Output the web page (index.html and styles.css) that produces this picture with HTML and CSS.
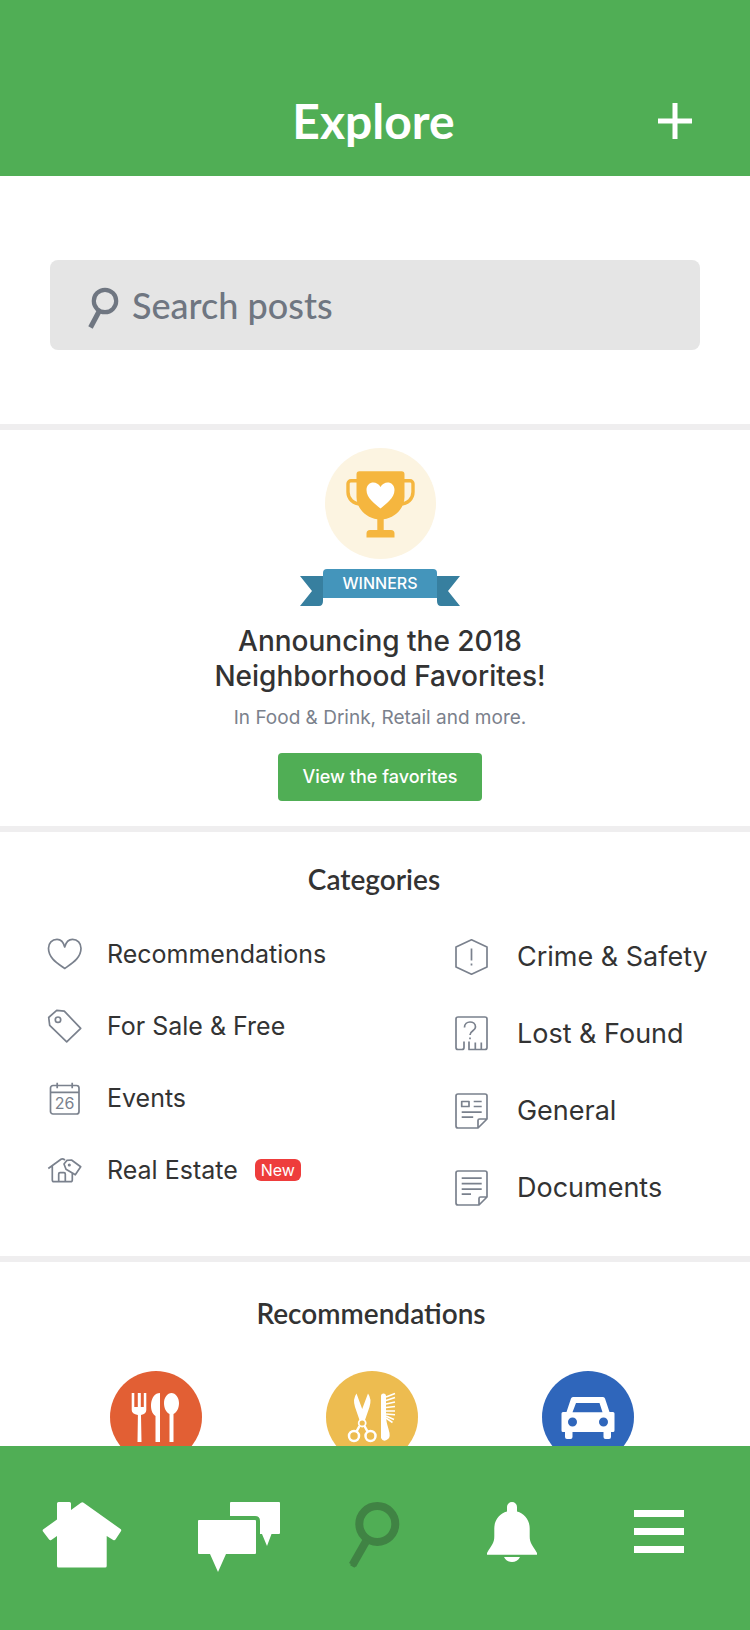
FILE: index.html
```html
<!DOCTYPE html>
<html lang="en">
<head>
<meta charset="utf-8">
<meta name="viewport" content="width=device-width, initial-scale=1">
<title>Explore</title>
<link rel="stylesheet" href="styles.css">
</head>
<body>
<div class="app">
  <header class="topbar">
    <h1 class="topbar-title">Explore</h1>
    <button class="add" type="button" aria-label="Add">
      <svg width="34" height="36" viewBox="0 0 34 36"><path d="M14.500 0h5v15.500H34v5H19.500V36h-5V20.500H0v-5h14.500z" fill="#fff"/></svg>
    </button>
  </header>

  <main class="content">
    <form class="search">
      <label class="search-box">
        <svg width="32" height="42" viewBox="0 0 32 42" fill="none" stroke="#6f7681" aria-hidden="true"><circle cx="17" cy="14" r="11.200" stroke-width="4.200"/><path d="M11 24.500 2.500 40.500" stroke-width="5"/></svg>
        <input class="search-input" type="search" placeholder="Search posts" aria-label="Search posts">
      </label>
    </form>

    <section class="promo">
      <svg width="111" height="111" viewBox="0 0 111 111" aria-hidden="true">
        <circle cx="55.500" cy="55.500" r="55.500" fill="#fcf4e1"/>
        <g fill="none" stroke="#f5b63f" stroke-width="3.400"><path d="M33 32.800h-7a3 3 0 0 0-3 3V44c0 6.500 5 12 13 12"/><path d="M78 32.800h7a3 3 0 0 1 3 3V44c0 6.500-5 12-13 12"/></g>
        <path d="M34.500 23.300h42a3 3 0 0 1 3 3V49c0 10-8 20.500-20.800 22.300V82h7.300a3.500 3.500 0 0 1 3.500 3.500v4h-28v-4A3.500 3.500 0 0 1 45 82h7.300V71.300C39.500 69.500 31.500 59 31.500 49V26.300a3 3 0 0 1 3-3z" fill="#f5b63f"/>
        <path d="M55.500 60.500C50 56 41.500 50 41.500 42c0-9 10.500-10 14-3 3.500-7 14-6 14 3 0 8-8.500 14-14 18.500z" fill="#fff"/>
      </svg>
      <div class="ribbon">
        <svg width="23" height="30" viewBox="0 0 23 30" aria-hidden="true"><path d="M0 0h23v25q0 5-4 5H0l12-15z" fill="#377f9f"/></svg>
        <span class="ribbon-label">WINNERS</span>
        <svg width="23" height="30" viewBox="0 0 23 30" aria-hidden="true"><path d="M23 0H0v25q0 5 4 5h19L11 15z" fill="#377f9f"/></svg>
      </div>
      <h2 class="promo-title">Announcing the 2018<br>Neighborhood Favorites!</h2>
      <p class="promo-text">In Food &amp; Drink, Retail and more.</p>
      <button class="promo-button" type="button">View the favorites</button>
    </section>

    <section class="categories">
      <h2 class="heading">Categories</h2>
      <div class="columns">
        <ul class="list">
          <li><a class="item" href="#recommendations">
            <svg class="icon" viewBox="0 0 36 36"><path d="M18.700 11C17.500 6 14.500 3.300 11 3.300c-5 0-8.500 4-8.500 9C2.500 22 11 27 18.700 32.500 26.500 27 35 22 35 12.300c0-5-3.500-9-8.500-9-3.500 0-6.500 2.700-7.800 7.700z"/></svg>
            <span>Recommendations</span></a></li>
          <li><a class="item" href="#sale">
            <svg class="icon" viewBox="0 0 36 36"><path d="M10.700 2.300 18.300 3.200 34.700 20.300 20.700 33.800 3.700 17.300 2.700 9.500z"/><circle cx="12" cy="11.700" r="2.700"/></svg>
            <span>For Sale &amp; Free</span></a></li>
          <li><a class="item" href="#events">
            <svg class="icon" viewBox="0 0 36 36"><rect x="4.500" y="5.500" width="28.500" height="28.500" rx="2.500"/><path d="M4.500 12.300H33M11.200 2.700v5.600M26.200 2.700v5.600"/><text class="icon-date" x="18.700" y="29.300" text-anchor="middle">26</text></svg>
            <span>Events</span></a></li>
          <li><a class="item" href="#real-estate">
            <svg class="icon" viewBox="0 0 36 36"><path d="M2.300 16.500 15 7.200q1.500-1 4 .8M6.300 14v14q0 1.700 1.700 1.700h16.500q1.800 0 1.800-1.700v-6.500M12.700 29.500V22q0-1.300 1.300-1.300h4q1.300 0 1.300 1.300v7.500M18 12l3-3.700 4.500-.3 9.200 6.800-5.400 8-9.300-5.600z"/><circle cx="23.300" cy="13" r=".7"/></svg>
            <span>Real Estate</span><span class="badge">New</span></a></li>
        </ul>
        <ul class="list list-large">
          <li><a class="item" href="#crime">
            <svg class="icon" viewBox="0 0 36 36"><path d="M17.500.8 33 8v20l-15.500 7.200L2 28V8zM17.500 9.500v12M17.500 24.500v2"/></svg>
            <span>Crime &amp; Safety</span></a></li>
          <li><a class="item" href="#lost">
            <svg class="icon" viewBox="0 0 36 36"><path d="M10 25.500v6q0 2-2 2H4q-2 0-2-2v-28.500q0-2 2-2h27q2 0 2 2v28.500q0 2-2 2H15v-8M21.300 26.500v7M27.300 26.500v7M10.500 11.500c0-7.500 11-7 11-.5 0 4-5.500 3.500-5.500 8M16 21.500v1.700"/></svg>
            <span>Lost &amp; Found</span></a></li>
          <li><a class="item" href="#general">
            <svg class="icon" viewBox="0 0 36 36"><path d="M33 26v-23q0-2-2-2H4q-2 0-2 2v30q0 2 2 2h20zM24 35v-7.500q0-1.500 1.500-1.500H33M7.700 8.500H15v5H7.700zM19.700 8.500h8M19.700 13.500h8M7.700 19.200h20M7.700 24.200h11.500"/></svg>
            <span>General</span></a></li>
          <li><a class="item" href="#documents">
            <svg class="icon" viewBox="0 0 36 36"><path d="M33 27v-24q0-2-2-2H4q-2 0-2 2v30q0 2 2 2h21zM25 35v-6.500q0-1.500 1.500-1.500H33M7.700 8.200h20M7.700 13.700h20M7.700 19.200h20M7.700 24.200h9.300"/></svg>
            <span>Documents</span></a></li>
        </ul>
      </div>
    </section>

    <section class="recommendations" id="recommendations">
      <h2 class="heading">Recommendations</h2>
      <div class="circles">
        <a class="circle circle-food" href="#food" aria-label="Food and drink">
          <svg viewBox="0 0 92 92" fill="#fff"><path d="M21.700 22h2.600v14h3.500V22h3v14h3V22h2.500v17q0 4-5.300 5l.5 27h-4l.4-27q-6.200-1-6.200-5z"/><path d="M50 22v49h-4.500V45c-7-4-6-23 4.500-23z"/><path d="M61.500 22c4 0 7.500 4.500 7.500 10 0 5-2 9-5.500 11v28h-4V43C56 41 54 37 54 32c0-5.500 3.500-10 7.500-10z"/></svg>
        </a>
        <a class="circle circle-beauty" href="#beauty" aria-label="Beauty">
          <svg viewBox="0 0 92 92" fill="none" stroke="#fff"><path d="M30.500 22.500 36.200 38 42 22.500Q46 28 43.500 36L39 49h-5.500L29 36Q26.500 28 30.500 22.500z" fill="#fff" stroke="none"/><circle cx="36.200" cy="52" r="3.500" stroke-width="1.800"/><circle cx="28" cy="65" r="5" stroke-width="2.500"/><circle cx="44.500" cy="65" r="5" stroke-width="2.500"/><path d="m33.500 55-3 5.500M38.500 55l3 5.500" stroke-width="2.500"/><path d="M55 25q0-2.500 2.500-2.500T60 25v20q0 5 2.500 13t-.5 10q-4.500 4-7-1z" fill="#fff" stroke="none"/><path d="m60 26 9-3.500M60 29.500l9-3M60 33l9-2M60 36.500l9-1M60 40h9M60 43l9 .7M60 45l8 3.500M60 47l6.500 4.500" stroke-width="1.600"/></svg>
        </a>
        <a class="circle circle-auto" href="#auto" aria-label="Automotive">
          <svg viewBox="0 0 92 92" fill="#fff"><path fill-rule="evenodd" d="M31 26h30q1.500 0 2 1.500L67.500 41H71q1.500 0 1.500 1.500v17q0 1.500-1.500 1.500h-2v5q0 2-2 2h-3.500q-2 0-2-2v-5h-31v5q0 2-2 2H25q-2 0-2-2v-5h-2q-1.500 0-1.500-1.500v-17q0-1.500 1.500-1.500h3.500L29 27.500q.5-1.500 2-1.500zm3 6-3.500 9.200h30L57.500 32zm-3.500 14.500a4.500 4.500 0 1 0 0 9 4.500 4.500 0 0 0 0-9zm31 0a4.500 4.500 0 1 0 0 9 4.500 4.500 0 0 0 0-9z"/></svg>
        </a>
      </div>
    </section>
  </main>

  <nav class="tabs" aria-label="Main">
    <button class="tab" type="button" aria-label="Home"><svg width="80" height="72" viewBox="0 0 80 72" fill="#fff"><path d="M16.500 0h11q1.500 0 1.500 1.500V8L39 .8q1.300-.9 2.600 0L78.500 27q1.300 1 .4 2.300L73.500 37.500q-.9 1.300-2.300.4L64.700 34v30q0 1.500-1.500 1.500H16.500Q15 65.500 15 64V34l-5.700 4q-1.300.9-2.200-.4L1 29.500q-.9-1.300.4-2.200L15 17.500v-16Q15 0 16.500 0z"/></svg></button>
    <button class="tab" type="button" aria-label="Messages"><svg width="84" height="72" viewBox="0 0 84 72" fill="#fff"><path d="M2 18h56q1 0 1 1v32q0 1-1 1H29l-8 18-8-18H2q-1 0-1-1V19q0-1 1-1z"/><path d="M34 0h48q1 0 1 1v30q0 1-1 1h-7.500L70 44l-5-12h-2V19q0-5-5-5H33V1q0-1 1-1z"/></svg></button>
    <button class="tab" type="button" aria-label="Explore" aria-current="page"><svg width="52" height="72" viewBox="0 0 52 72" fill="none" stroke="#408344" stroke-width="8"><circle cx="29.300" cy="22" r="18"/><path d="M18.500 38.500 4.500 63"/><path d="M6 61.500 4.300 64.500" stroke-width="5"/></svg></button>
    <button class="tab" type="button" aria-label="Notifications"><svg width="52" height="72" viewBox="0 0 52 72" fill="#fff"><path d="M21 5a5 5 0 0 1 10 0v4.500c7.500 2 12.700 8.500 12.700 17V34c0 7 2.300 8.500 7.300 17v1.700H1V51c5-8.500 7.300-10 7.300-17v-7.500c0-8.500 5.200-15 12.700-17zM18 55h16c-3 6.700-13 6.700-16 0z"/></svg></button>
    <button class="tab" type="button" aria-label="Menu"><svg width="52" height="72" viewBox="0 0 52 72" fill="#fff"><path d="M1 8h50v7H1zM1 26h50v7H1zM1 44h50v7H1z"/></svg></button>
  </nav>
</div>
</body>
</html>
```
FILE: styles.css
```css
* {
  box-sizing: border-box;
}

body {
  margin: 0;
  font-family: Inter, "Liberation Sans", sans-serif;
  color: #333;
  background: #fff;
}

h1, h2, p, ul {
  margin: 0;
  padding: 0;
}

button {
  border: 0;
  padding: 0;
  background: none;
  font-family: inherit;
  cursor: pointer;
}

a {
  color: inherit;
  text-decoration: none;
}

svg {
  display: block;
  flex: none;
}

.app {
  display: flex;
  flex-direction: column;
  height: 100vh;
}

.topbar {
  flex: none;
  display: grid;
  grid-template-columns: 1fr auto 1fr;
  align-items: center;
  padding: 89px 58px 23px 55px;
  background: #50ae55;
}

.topbar-title {
  grid-column: 2;
  font: 700 48px/64px Lato, sans-serif;
  color: #fff;
}

.add {
  justify-self: end;
}

.content {
  flex: 1;
  min-height: 0;
  overflow-y: auto;
  scrollbar-width: none;
}

.search {
  padding: 84px 50px 74px;
}

.search-box {
  display: flex;
  align-items: center;
  gap: 12px;
  height: 90px;
  padding: 0 38px;
  border-radius: 8px;
  background: #e5e5e5;
}

.search-box svg {
  margin-top: 6px;
}

.search-input {
  flex: 1;
  min-width: 0;
  padding: 0;
  border: 0;
  outline: 0;
  background: none;
  font: 500 36px/44px Lato, sans-serif;
  color: #6f7681;
}

.search-input::placeholder {
  color: #6f7681;
  opacity: 1;
}

.promo,
.categories,
.recommendations {
  border-top: 6px solid #efeeef;
}

.promo {
  display: flex;
  flex-direction: column;
  align-items: center;
  padding: 18px 0 25px 10px;
}

.ribbon {
  display: flex;
  align-items: flex-end;
  height: 37px;
  margin: 10px 0 18px;
}

.ribbon-label {
  align-self: flex-start;
  padding: 0 20px;
  border-radius: 4px 4px 0 0;
  background: #4495bb;
  color: #fff;
  font-size: 16px;
  font-weight: 500;
  line-height: 29px;
}

.promo-title {
  font-size: 28px;
  font-weight: 500;
  line-height: 35px;
  text-align: center;
}

.promo-text {
  margin: 12px 0 23px;
  font-size: 19px;
  line-height: 24px;
  color: #7b818c;
}

.promo-button {
  padding: 0 25px;
  border-radius: 4px;
  background: #50ae55;
  color: #fff;
  font-size: 18px;
  font-weight: 500;
  line-height: 48px;
}

.heading {
  font: 600 28px/34px Lato, sans-serif;
  text-align: center;
}

.categories {
  padding: 30px 0;
}

.categories .heading {
  padding-right: 2px;
}

.columns {
  display: grid;
  grid-template-columns: 62% 38%;
  padding: 22px 46px 0;
}

.list {
  list-style: none;
  font-size: 25px;
  line-height: 72px;
}

.list-large {
  font-size: 27px;
  line-height: 77px;
}

.item {
  display: flex;
  align-items: center;
  gap: 25px;
  white-space: nowrap;
}

.list-large .item {
  gap: 27px;
}

.icon {
  width: 36px;
  height: 36px;
  fill: none;
  stroke: #7a818d;
  stroke-width: 1.7;
  stroke-linejoin: round;
}

.icon-date {
  fill: #7a818d;
  stroke: none;
  font-size: 16px;
}

.badge {
  margin-left: -8px;
  padding: 0 6px;
  border-radius: 6px;
  background: #ee3d3c;
  color: #fff;
  font-size: 16px;
  line-height: 22px;
}

.recommendations {
  padding: 34px 0;
}

.recommendations .heading {
  padding-right: 8px;
}

.circles {
  display: grid;
  grid-template-columns: repeat(3, 1fr);
  justify-items: center;
  padding: 41px 54px 0 48px;
}

.circle {
  width: 92px;
  height: 92px;
  border-radius: 50%;
}

.circle-food {
  background: #e25f34;
}

.circle-beauty {
  background: #edbc50;
}

.circle-auto {
  background: #2f66bb;
}

.tabs {
  flex: none;
  display: grid;
  grid-template-columns: 164fr 150fr 120fr 156fr 138fr;
  padding: 56px 22px 56px 0;
  background: #50ae55;
}

.tab {
  display: flex;
  justify-content: center;
}
```
